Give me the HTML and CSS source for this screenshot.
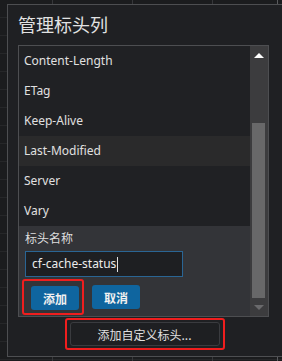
FILE: index.html
```html
<!DOCTYPE html>
<html lang="zh-CN">
<head>
    <meta charset="UTF-8">
    <title>管理标头列</title>
    <link rel="stylesheet" href="styles.css">
</head>
<body>
<div class="backdrop">
    <div class="col c1"></div>
    <div class="col c2"></div>
    <div class="col c3"></div>
    <div class="col c4"></div>
    <div class="col c5">
        <span class="lnk">l</span>
        <span class="lnk">l</span>
        <span class="lnk">l</span>
        <span class="lnk">l</span>
    </div>
</div>

<div class="dialog">
    <h1 class="title">管理标头列</h1>
    <div class="listbox">
        <div class="list">
            <div class="row">Content-Length</div>
            <div class="row">ETag</div>
            <div class="row">Keep-Alive</div>
            <div class="row hover">Last-Modified</div>
            <div class="row">Server</div>
            <div class="row">Vary</div>
            <div class="form">
                <label class="label">标头名称</label>
                <div class="input">cf-cache-status<span class="caret"></span></div>
                <div class="actions">
                    <div class="mark">
                        <button class="btn">添加</button>
                    </div>
                    <button class="btn">取消</button>
                </div>
            </div>
        </div>
        <div class="scrollbar">
            <div class="arrow up"></div>
            <div class="track"><div class="thumb"></div></div>
            <div class="arrow down"></div>
        </div>
    </div>
    <div class="footer">
        <div class="mark wide">
            <button class="btn-ghost">添加自定义标头...</button>
        </div>
    </div>
</div>
</body>
</html>
```

FILE: styles.css
```css
body {
    margin: 0;
    width: 282px;
    height: 361px;
    overflow: hidden;
    background: #1b1c1e;
    font-family: "Noto Sans", "Noto Sans CJK SC", sans-serif;
    color: #dcdcdc;
    position: relative;
}

.backdrop {
    display: flex;
    height: 100%;
}

.col {
    border-right: 1px solid #36373a;
    background: repeating-linear-gradient(#1b1c1e 0, #1b1c1e 17px, #262729 17px, #262729 18px);
}

.c1 { width: 53px; }
.c2 { width: 80px; }
.c3 { width: 80px; }
.c4 { width: 65px; border-right: 1px solid #5a5b5e; }
.c5 {
    flex: 1;
    border: 0;
    display: flex;
    flex-direction: column;
    padding-top: 276px;
    gap: 6px;
}

.lnk {
    font-size: 12px;
    line-height: 12px;
    color: #e8e8e8;
    text-decoration: underline;
    margin-left: 1px;
}

.dialog {
    position: absolute;
    left: 7px;
    top: 4px;
    width: 270px;
    height: 351px;
    border: 1px solid #4d4e51;
    background: #1f2023;
    padding: 0 0 0 10px;
    box-sizing: content-box;
    display: flex;
    flex-direction: column;
}

.title {
    margin: 0;
    font-size: 18px;
    font-weight: normal;
    color: #e2e2e2;
    height: 40px;
    line-height: 40px;
    margin-top: 0;
    margin-left: 0;
}

.listbox {
    width: 249px;
    height: 270px;
    border: 1px solid #4d4e51;
    display: flex;
}

.list {
    width: 231px;
    background: #202124;
    display: flex;
    flex-direction: column;
}

.row {
    height: 30px;
    line-height: 30px;
    padding-left: 5px;
    font-size: 12px;
    color: #e0e0e0;
}

.row.hover {
    background: #2a2a2b;
}

.form {
    flex: 1;
    background: #333438;
    padding: 5px 0 0 6px;
    display: flex;
    flex-direction: column;
}

.label {
    font-size: 12px;
    line-height: 16px;
    color: #dedede;
}

.input {
    margin-top: 4px;
    width: 150px;
    height: 24px;
    line-height: 24px;
    border: 1px solid #2a6594;
    background: #1e1f22;
    font-size: 12px;
    padding-left: 6px;
    color: #ececec;
    display: flex;
    align-items: center;
}

.caret {
    display: inline-block;
    width: 1px;
    height: 15px;
    background: #e0e0e0;
    margin-left: 1px;
}

.actions {
    display: flex;
    align-items: center;
    gap: 8px;
    margin-top: 2px;
    margin-left: -3px;
}

.mark {
    border: 2px solid #f01e1e;
    border-radius: 3px;
    padding: 5px 3px 3px 7px;
}

.btn {
    width: 48px;
    height: 24px;
    border: 0;
    border-radius: 3px;
    background: #0f659f;
    color: #f0f0f0;
    font-family: "Noto Sans CJK SC", sans-serif;
    font-size: 12px;
    font-weight: bold;
    padding: 0;
}

.actions > .btn {
    margin-top: 0;
}

.scrollbar {
    width: 18px;
    background: #3c3c3e;
    display: flex;
    flex-direction: column;
}

.arrow {
    height: 18px;
    display: flex;
    align-items: center;
    justify-content: center;
}

.arrow.up::before {
    content: "";
    border-left: 5px solid transparent;
    border-right: 5px solid transparent;
    border-bottom: 5px solid #ffffff;
}

.arrow.down::before {
    content: "";
    border-left: 5px solid transparent;
    border-right: 5px solid transparent;
    border-top: 5px solid #6a6a6c;
}

.track {
    flex: 1;
    padding: 59px 3px 0 2px;
    display: flex;
}

.thumb {
    flex: 1;
    background: #686869;
}

.footer {
    display: flex;
    justify-content: center;
    padding-right: 10px;
    margin-top: 1px;
}

.mark.wide {
    padding: 2px 3px;
    margin-left: -7px;
}

.btn-ghost {
    width: 150px;
    height: 24px;
    border: 1px solid #3a3b3f;
    border-radius: 3px;
    background: #1e1f22;
    color: #e0e0e0;
    font-family: "Noto Sans CJK SC", sans-serif;
    font-size: 12px;
    padding: 0;
}
```
